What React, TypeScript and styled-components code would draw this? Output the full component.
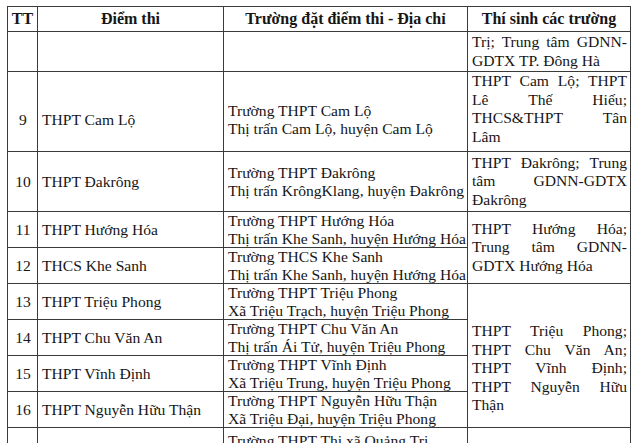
import React from "react";
import styled, { createGlobalStyle } from "styled-components";

const GlobalStyle = createGlobalStyle`
  body {
    margin: 0;
    background: #fff;
    overflow: hidden;
  }
`;

const Page = styled.div`
  padding: 6px 0 0 7px;
  font-family: "Liberation Serif", "Times New Roman", serif;
  font-size: 15.6px;
  color: #161616;
`;

const Table = styled.table`
  border-collapse: collapse;
  table-layout: fixed;
  width: 623px;
`;

const HeadCell = styled.th`
  border: 1px solid #3a3a3a;
  font-weight: bold;
  font-size: 16px;
  text-align: center;
  height: 24px;
  padding: 0;
  line-height: 18px;
`;

const Row = styled.tr<{ $h: number }>`
  height: ${(p) => p.$h}px;
`;

const Cell = styled.td<{ $align?: "left" | "center"; $top?: number; $valign?: "top" | "middle" }>`
  border: 1px solid #3a3a3a;
  padding: ${(p) => p.$top ?? 0}px 3px 0 4px;
  line-height: 17.5px;
  text-align: ${(p) => p.$align ?? "left"};
  vertical-align: ${(p) => p.$valign ?? "middle"};
  white-space: nowrap;
`;

const Line = styled.div<{ $last?: boolean }>`
  line-height: 18.5px;
  text-align: justify;
  text-align-last: ${(p) => (p.$last ? "left" : "justify")};
`;

type Site = {
  tt: string;
  name: string;
  school: string;
  addr: string;
  h: number;
  top?: number;
  addrTop?: number;
  schools?: string[];
  span?: number;
  schoolsTop?: number;
  schoolsAlign?: "top" | "middle";
};

const rows: Site[] = [
  {
    tt: "",
    name: "",
    school: "",
    addr: "",
    h: 40,
    schools: ["Trị; Trung tâm GDNN-", "GDTX TP. Đông Hà"],
  },
  {
    tt: "9",
    name: "THPT Cam Lộ",
    school: "Trường THPT Cam Lộ",
    addr: "Thị trấn Cam Lộ, huyện Cam Lộ",
    h: 80,
    top: 16,
    schoolsAlign: "top",
    schools: ["THPT Cam Lộ; THPT", "Lê Thế Hiếu;", "THCS&THPT Tân", "Lâm"],
  },
  {
    tt: "10",
    name: "THPT Đakrông",
    school: "Trường THPT Đakrông",
    addr: "Thị trấn KrôngKlang, huyện Đakrông",
    h: 60,
    schools: ["THPT Đakrông; Trung", "tâm GDNN-GDTX", "Đakrông"],
  },
  {
    tt: "11",
    name: "THPT Hướng Hóa",
    school: "Trường THPT Hướng Hóa",
    addr: "Thị trấn Khe Sanh, huyện Hướng Hóa",
    h: 36,
    span: 2,
    schools: ["THPT Hướng Hóa;", "Trung tâm GDNN-", "GDTX Hướng Hóa"],
  },
  {
    tt: "12",
    name: "THCS Khe Sanh",
    school: "Trường THCS Khe Sanh",
    addr: "Thị trấn Khe Sanh, huyện Hướng Hóa",
    h: 36,
  },
  {
    tt: "13",
    name: "THPT Triệu Phong",
    school: "Trường THPT Triệu Phong",
    addr: "Xã Triệu Trạch, huyện Triệu Phong",
    h: 36,
    span: 4,
    schoolsAlign: "top",
    schoolsTop: 38,
    schools: [
      "THPT Triệu Phong;",
      "THPT Chu Văn An;",
      "THPT Vĩnh Định;",
      "THPT Nguyễn Hữu",
      "Thận",
    ],
  },
  {
    tt: "14",
    name: "THPT Chu Văn An",
    school: "Trường THPT Chu Văn An",
    addr: "Thị trấn Ái Tử, huyện Triệu Phong",
    h: 36,
  },
  {
    tt: "15",
    name: "THPT Vĩnh Định",
    school: "Trường THPT Vĩnh Định",
    addr: "Xã Triệu Trung, huyện Triệu Phong",
    h: 36,
  },
  {
    tt: "16",
    name: "THPT Nguyễn Hữu Thận",
    school: "Trường THPT Nguyễn Hữu Thận",
    addr: "Xã Triệu Đại, huyện Triệu Phong",
    h: 36,
  },
  {
    tt: "17",
    name: "THPT Thị xã Quảng Trị",
    school: "Trường THPT Thị xã Quảng Trị",
    addr: "Phường 1, thị xã Quảng Trị",
    h: 70,
    addrTop: 4,
    schoolsAlign: "middle",
    schools: ["THPT Thị xã Quảng", "Trị"],
  },
];

const App = () => {
  return (
    <Page>
      <GlobalStyle />
      <Table>
        <colgroup>
          <col style={{ width: 30 }} />
          <col style={{ width: 186 }} />
          <col style={{ width: 244 }} />
          <col style={{ width: 163 }} />
        </colgroup>
        <thead>
          <tr>
            <HeadCell>TT</HeadCell>
            <HeadCell>Điểm thi</HeadCell>
            <HeadCell>Trường đặt điểm thi - Địa chỉ</HeadCell>
            <HeadCell>Thí sinh các trường</HeadCell>
          </tr>
        </thead>
        <tbody>
          {rows.map((r, i) => (
            <Row key={i} $h={r.h}>
              <Cell $align="center" $top={r.top}>
                {r.tt}
              </Cell>
              <Cell $top={r.top}>{r.name}</Cell>
              <Cell
                $top={r.addrTop ?? r.top}
                $valign={r.addrTop !== undefined ? "top" : "middle"}
              >
                {r.school}
                {r.addr && <br />}
                {r.addr}
              </Cell>
              {r.schools && (
                <Cell
                  rowSpan={r.span ?? 1}
                  $valign={r.schoolsAlign ?? "middle"}
                  $top={r.schoolsTop ?? 0}
                >
                  {r.schools.map((s, j) => (
                    <Line key={j} $last={j === r.schools!.length - 1}>
                      {s}
                    </Line>
                  ))}
                </Cell>
              )}
            </Row>
          ))}
        </tbody>
      </Table>
    </Page>
  );
};

export default App;
